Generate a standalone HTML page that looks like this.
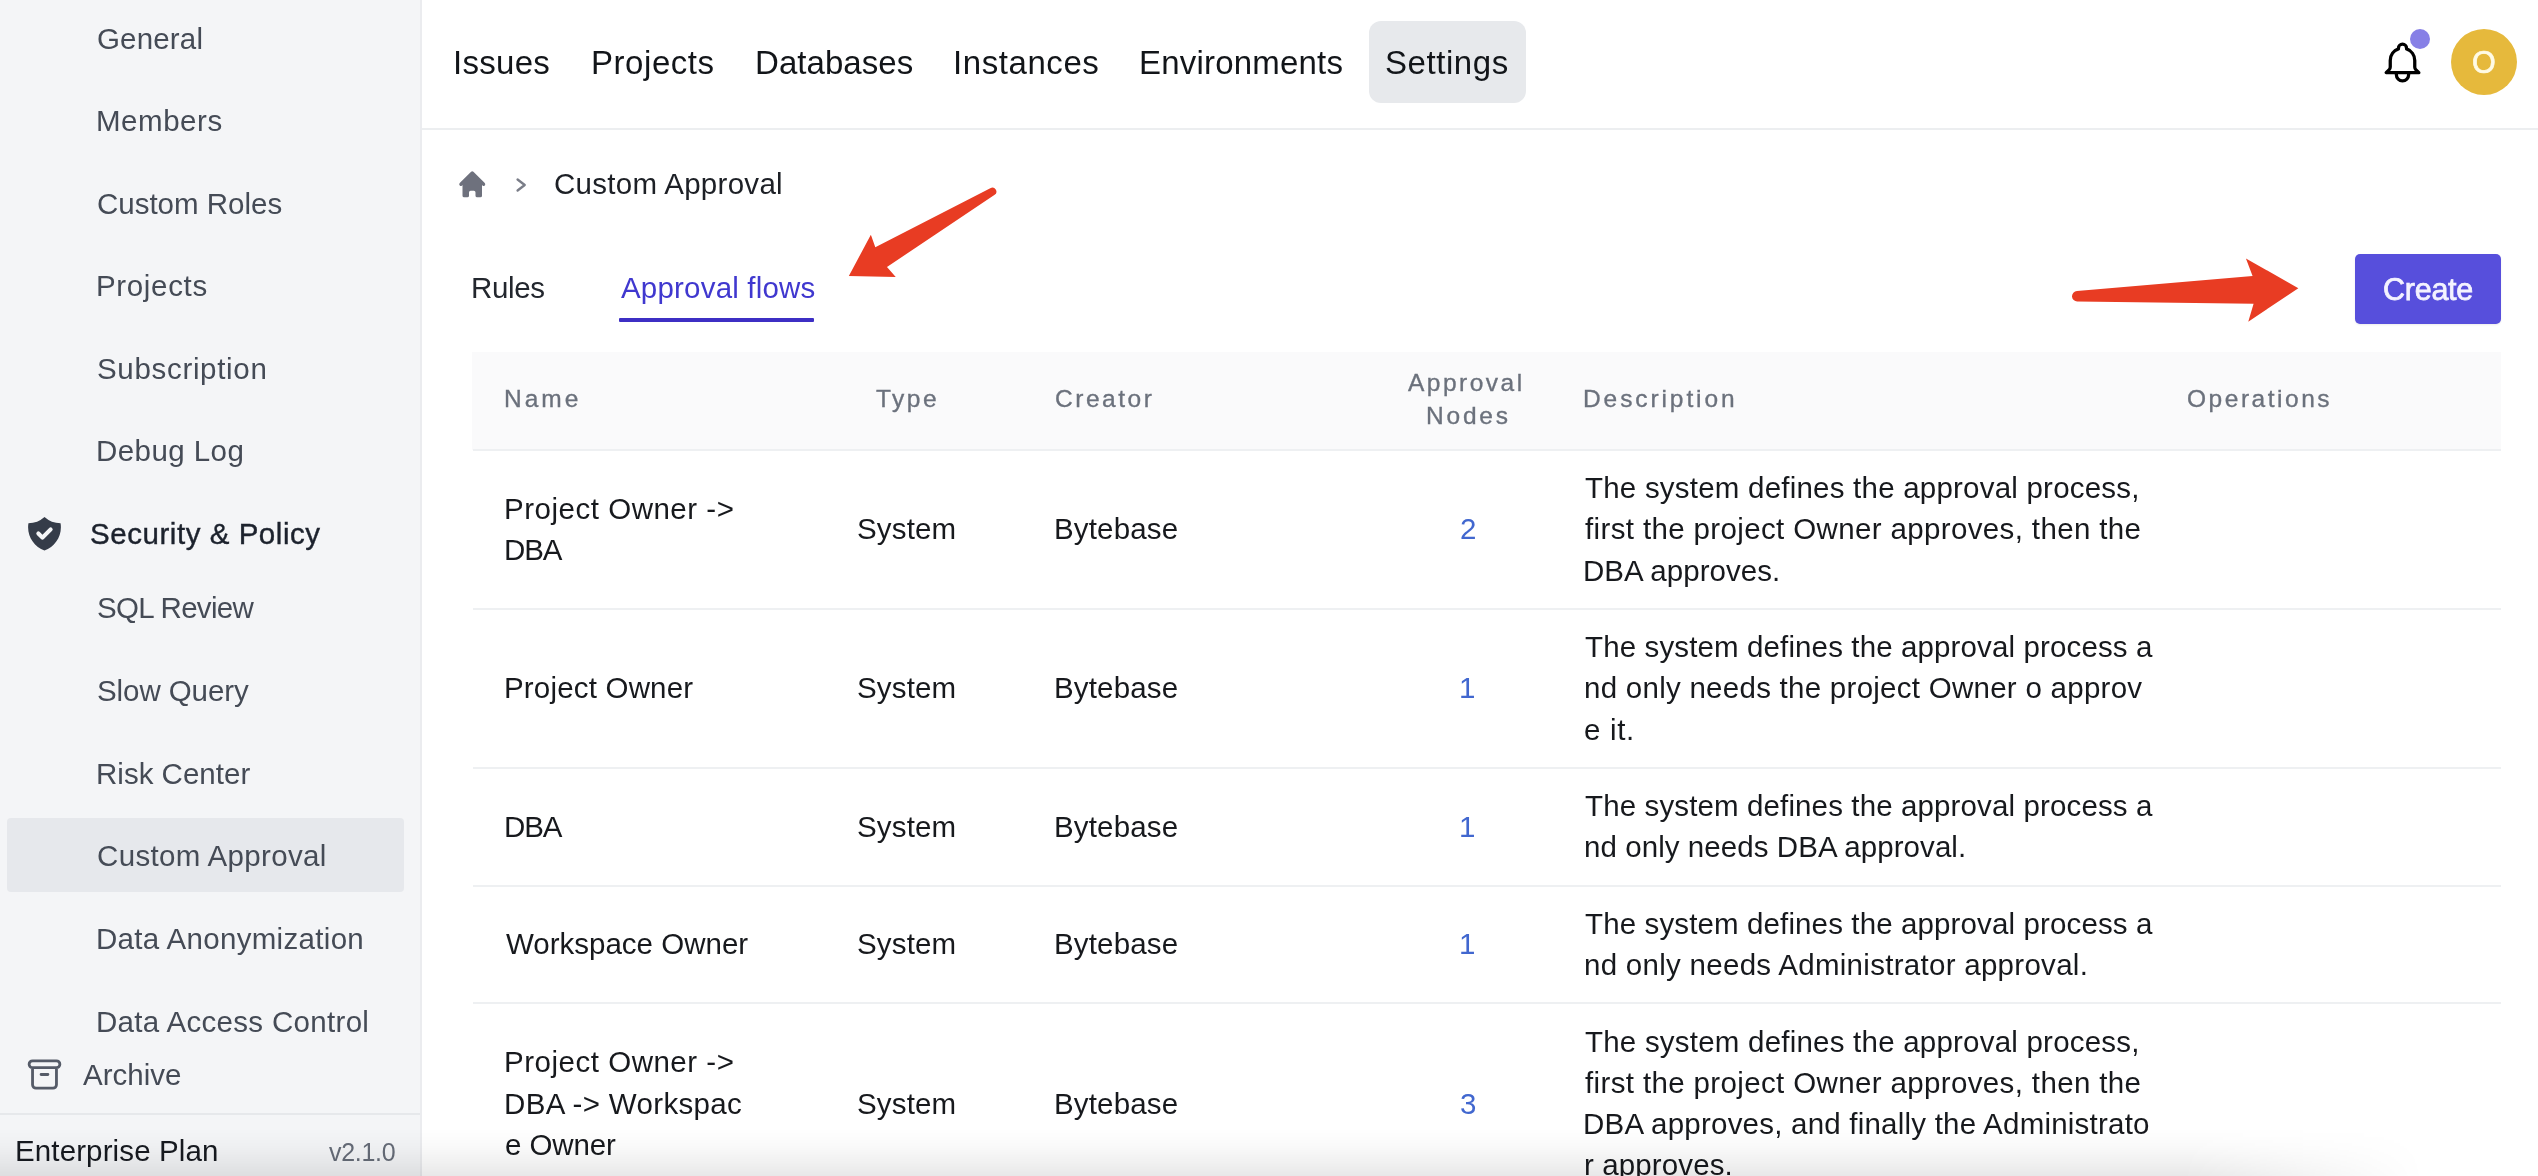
<!DOCTYPE html>
<html>
<head>
<meta charset="utf-8">
<title>Custom Approval</title>
<style>
*{box-sizing:border-box;margin:0;padding:0}
html,body{width:2538px;height:1176px;overflow:hidden;background:#fff}
body{position:relative;font-family:"Liberation Sans",sans-serif;color:#1f2937}
.a{position:absolute}
.x{position:absolute;white-space:pre;will-change:transform}
.rl{position:absolute;left:472.5px;width:2028px;height:2.1px;background:#eef0f2}
</style>
</head>
<body>
<div id="clip" style="position:absolute;left:0;top:0;width:2538px;height:1176px;overflow:hidden">
<div id="w" style="position:absolute;left:-20px;top:-20px;width:2578px;height:1216px;overflow:hidden;filter:blur(0.7px)">
<div style="position:absolute;left:20px;top:20px;width:2538px;height:1176px">

<!-- sidebar -->
<div class="a" style="left:-20px;top:-20px;width:442.3px;height:1216px;background:#f4f5f7;border-right:2.3px solid #ebecef"></div>
<div class="a" style="left:7.3px;top:818.3px;width:396.7px;height:73.4px;background:#e6e8ec;border-radius:4px"></div>
<svg class="a" style="left:23.6px;top:513px" width="41" height="41" viewBox="0 0 20 20"><path fill="#353c49" fill-rule="evenodd" clip-rule="evenodd" d="M2.166 4.999A11.954 11.954 0 0010 1.944 11.954 11.954 0 0017.834 5c.11.65.166 1.32.166 2.001 0 5.225-3.34 9.67-8 11.317C5.34 16.67 2 12.225 2 7c0-.682.057-1.35.166-2.001zm11.541 3.708a1 1 0 00-1.414-1.414L9 10.586 7.707 9.293a1 1 0 00-1.414 1.414l2 2a1 1 0 001.414 0l4-4z"/></svg>
<svg class="a" style="left:23.6px;top:1054px" width="41" height="41" viewBox="0 0 24 24" fill="none" stroke="#555b68" stroke-width="1.65" stroke-linecap="round" stroke-linejoin="round"><path d="M5 8h14M5 8a2 2 0 110-4h14a2 2 0 110 4M5 8v10a2 2 0 002 2h10a2 2 0 002-2V8m-9 4h4"/></svg>
<div class="a" style="left:-20px;top:1112.5px;width:440px;height:2px;background:#e6e8eb"></div>

<!-- top bar -->
<div class="a" style="left:422.3px;top:127.9px;width:2140px;height:2px;background:#eceef0"></div>
<div class="a" style="left:1368.7px;top:20.7px;width:157.3px;height:82.6px;background:#e7e9ec;border-radius:12px"></div>
<svg class="a" style="left:2377.5px;top:37.5px" width="49" height="49" viewBox="0 0 24 24" fill="none" stroke="#000" stroke-width="1.6" stroke-linecap="round" stroke-linejoin="round"><path d="M15 17h5l-1.405-1.405A2.032 2.032 0 0118 14.158V11a6.002 6.002 0 00-4-5.659V5a2 2 0 10-4 0v.341C7.67 6.165 6 8.388 6 11v3.159c0 .538-.214 1.055-.595 1.436L4 17h5m6 0v1a3 3 0 11-6 0v-1m6 0H9"/></svg>
<div class="a" style="left:2410.3px;top:29.3px;width:20px;height:20px;border-radius:50%;background:#8780e6"></div>
<div class="a" style="left:2451.3px;top:29.2px;width:66px;height:66px;border-radius:50%;background:#e6b93c"></div>

<!-- breadcrumb icons -->
<svg class="a" style="left:455.9px;top:167.8px" width="32.5" height="32.5" viewBox="0 0 20 20"><path fill="#6e717d" d="M10.707 2.293a1 1 0 00-1.414 0l-7 7a1 1 0 001.414 1.414L4 10.414V17a1 1 0 001 1h2a1 1 0 001-1v-2a1 1 0 011-1h2a1 1 0 011 1v2a1 1 0 001 1h2a1 1 0 001-1v-6.586l.293.293a1 1 0 001.414-1.414l-7-7z"/></svg>
<svg class="a" style="left:511.3px;top:173.7px" width="20" height="22" viewBox="0 0 20 22" fill="none" stroke="#7a7d88" stroke-width="2.4" stroke-linecap="round" stroke-linejoin="round"><path d="M6.6 5.5 L13.7 11 L6.6 16.5"/></svg>

<!-- tab underline -->
<div class="a" style="left:619.3px;top:318.2px;width:195px;height:4.1px;background:#3d2fc4;border-radius:1px"></div>

<!-- create button -->
<div class="a" style="left:2354.7px;top:254px;width:146.6px;height:70px;background:#574fdc;border-radius:5px;box-shadow:0 1px 2px rgba(0,0,0,.08)"></div>

<!-- table -->
<div class="a" style="left:472.3px;top:351.5px;width:2028.4px;height:98px;background:#fafafb"></div>
<div class="rl" style="top:448.9px"></div>
<div class="rl" style="top:607.7px"></div>
<div class="rl" style="top:766.8px"></div>
<div class="rl" style="top:884.5px"></div>
<div class="rl" style="top:1002.2px"></div>

<div class="x" style="left:97.30px;top:17.70px;font-size:29.5px;line-height:41px;letter-spacing:0.167px;color:#454b56;">General</div>
<div class="x" style="left:96.30px;top:100.20px;font-size:29.5px;line-height:41px;letter-spacing:0.535px;color:#454b56;">Members</div>
<div class="x" style="left:97.30px;top:182.70px;font-size:29.5px;line-height:41px;letter-spacing:-0.009px;color:#454b56;">Custom Roles</div>
<div class="x" style="left:96.30px;top:265.20px;font-size:29.5px;line-height:41px;letter-spacing:0.655px;color:#454b56;">Projects</div>
<div class="x" style="left:97.30px;top:347.70px;font-size:29.5px;line-height:41px;letter-spacing:0.679px;color:#454b56;">Subscription</div>
<div class="x" style="left:96.30px;top:430.20px;font-size:29.5px;line-height:41px;letter-spacing:0.433px;color:#454b56;">Debug Log</div>
<div class="x" style="left:89.70px;top:513.20px;font-size:29.5px;line-height:41px;letter-spacing:0.545px;color:#1c222d;-webkit-text-stroke:0.4px #1c222d;">Security &amp; Policy</div>
<div class="x" style="left:97.30px;top:587.20px;font-size:29.5px;line-height:41px;letter-spacing:-0.661px;color:#454b56;">SQL Review</div>
<div class="x" style="left:97.30px;top:669.90px;font-size:29.5px;line-height:41px;letter-spacing:-0.080px;color:#454b56;">Slow Query</div>
<div class="x" style="left:96.30px;top:752.60px;font-size:29.5px;line-height:41px;letter-spacing:0.013px;color:#454b56;">Risk Center</div>
<div class="x" style="left:97.30px;top:835.30px;font-size:29.5px;line-height:41px;letter-spacing:0.335px;color:#454b56;">Custom Approval</div>
<div class="x" style="left:96.30px;top:918.00px;font-size:29.5px;line-height:41px;letter-spacing:0.318px;color:#454b56;">Data Anonymization</div>
<div class="x" style="left:96.30px;top:1000.70px;font-size:29.5px;line-height:41px;letter-spacing:0.315px;color:#454b56;">Data Access Control</div>
<div class="x" style="left:82.70px;top:1053.50px;font-size:29.5px;line-height:41px;letter-spacing:0.007px;color:#454b56;">Archive</div>
<div class="x" style="left:14.70px;top:1130.20px;font-size:29.5px;line-height:41px;letter-spacing:0.123px;color:#171a20;">Enterprise Plan</div>
<div class="x" style="left:329.30px;top:1134.50px;font-size:25px;line-height:35px;letter-spacing:-0.300px;color:#666c78;">v2.1.0</div>
<div class="x" style="left:453.00px;top:40.00px;font-size:33px;line-height:46px;letter-spacing:0.285px;color:#121519;">Issues</div>
<div class="x" style="left:590.70px;top:40.00px;font-size:33px;line-height:46px;letter-spacing:0.556px;color:#121519;">Projects</div>
<div class="x" style="left:755.00px;top:40.00px;font-size:33px;line-height:46px;letter-spacing:0.054px;color:#121519;">Databases</div>
<div class="x" style="left:953.00px;top:40.00px;font-size:33px;line-height:46px;letter-spacing:0.569px;color:#121519;">Instances</div>
<div class="x" style="left:1139.30px;top:40.00px;font-size:33px;line-height:46px;letter-spacing:0.195px;color:#121519;">Environments</div>
<div class="x" style="left:1385.00px;top:40.00px;font-size:33px;line-height:46px;letter-spacing:0.566px;color:#121519;">Settings</div>
<div class="x" style="left:554.00px;top:163.00px;font-size:29.5px;line-height:41px;letter-spacing:0.285px;color:#1d2026;">Custom Approval</div>
<div class="x" style="left:470.70px;top:267.20px;font-size:29.5px;line-height:41px;letter-spacing:-0.343px;color:#23272e;">Rules</div>
<div class="x" style="left:620.70px;top:267.20px;font-size:29.5px;line-height:41px;letter-spacing:0.193px;color:#4038cf;">Approval flows</div>
<div class="x" style="left:2382.70px;top:268.20px;font-size:30.5px;line-height:43px;letter-spacing:-0.256px;color:#f4f3ff;-webkit-text-stroke:0.75px #f4f3ff;">Create</div>
<div class="x" style="left:2472.20px;top:40.90px;font-size:30.5px;line-height:43px;letter-spacing:0.000px;color:#fffbe6;-webkit-text-stroke:0.7px #fffbe6;">O</div>
<div class="x" style="left:504.00px;top:382.00px;font-size:24.5px;line-height:34px;letter-spacing:2.991px;color:#6b717c;-webkit-text-stroke:0.35px #6b717c;">Name</div>
<div class="x" style="left:876.00px;top:382.00px;font-size:24.5px;line-height:34px;letter-spacing:2.503px;color:#6b717c;-webkit-text-stroke:0.35px #6b717c;">Type</div>
<div class="x" style="left:1055.00px;top:382.00px;font-size:24.5px;line-height:34px;letter-spacing:2.527px;color:#6b717c;-webkit-text-stroke:0.35px #6b717c;">Creator</div>
<div class="x" style="left:1407.50px;top:365.50px;font-size:24.5px;line-height:34px;letter-spacing:2.492px;color:#6b717c;-webkit-text-stroke:0.35px #6b717c;">Approval</div>
<div class="x" style="left:1425.60px;top:398.60px;font-size:24.5px;line-height:34px;letter-spacing:2.807px;color:#6b717c;-webkit-text-stroke:0.35px #6b717c;">Nodes</div>
<div class="x" style="left:1582.70px;top:382.00px;font-size:24.5px;line-height:34px;letter-spacing:2.908px;color:#6b717c;-webkit-text-stroke:0.35px #6b717c;">Description</div>
<div class="x" style="left:2187.00px;top:382.00px;font-size:24.5px;line-height:34px;letter-spacing:2.523px;color:#6b717c;-webkit-text-stroke:0.35px #6b717c;">Operations</div>
<div class="x" style="left:504.00px;top:487.54px;font-size:29.5px;line-height:41px;letter-spacing:0.519px;color:#17191d;">Project Owner -&gt;</div>
<div class="x" style="left:504.00px;top:528.87px;font-size:29.5px;line-height:41px;letter-spacing:-1.140px;color:#17191d;">DBA</div>
<div class="x" style="left:856.70px;top:508.20px;font-size:29.5px;line-height:41px;letter-spacing:0.164px;color:#17191d;">System</div>
<div class="x" style="left:1054.00px;top:508.20px;font-size:29.5px;line-height:41px;letter-spacing:0.158px;color:#17191d;">Bytebase</div>
<div class="x" style="left:1460.15px;top:508.20px;font-size:29.5px;line-height:41px;letter-spacing:0.000px;color:#4167cf;">2</div>
<div class="x" style="left:1584.70px;top:466.87px;font-size:29.5px;line-height:41px;letter-spacing:0.217px;color:#17191d;">The system defines the approval process,</div>
<div class="x" style="left:1584.70px;top:508.20px;font-size:29.5px;line-height:41px;letter-spacing:0.363px;color:#17191d;">first the project Owner approves, then the</div>
<div class="x" style="left:1582.70px;top:549.53px;font-size:29.5px;line-height:41px;letter-spacing:0.033px;color:#17191d;">DBA approves.</div>
<div class="x" style="left:504.00px;top:667.30px;font-size:29.5px;line-height:41px;letter-spacing:0.186px;color:#17191d;">Project Owner</div>
<div class="x" style="left:856.70px;top:667.30px;font-size:29.5px;line-height:41px;letter-spacing:0.164px;color:#17191d;">System</div>
<div class="x" style="left:1054.00px;top:667.30px;font-size:29.5px;line-height:41px;letter-spacing:0.158px;color:#17191d;">Bytebase</div>
<div class="x" style="left:1458.85px;top:667.30px;font-size:29.5px;line-height:41px;letter-spacing:0.000px;color:#4167cf;">1</div>
<div class="x" style="left:1584.70px;top:625.97px;font-size:29.5px;line-height:41px;letter-spacing:0.124px;color:#17191d;">The system defines the approval process a</div>
<div class="x" style="left:1583.70px;top:667.30px;font-size:29.5px;line-height:41px;letter-spacing:0.265px;color:#17191d;">nd only needs the project Owner o approv</div>
<div class="x" style="left:1583.70px;top:708.63px;font-size:29.5px;line-height:41px;letter-spacing:0.662px;color:#17191d;">e it.</div>
<div class="x" style="left:504.00px;top:805.70px;font-size:29.5px;line-height:41px;letter-spacing:-1.140px;color:#17191d;">DBA</div>
<div class="x" style="left:856.70px;top:805.70px;font-size:29.5px;line-height:41px;letter-spacing:0.164px;color:#17191d;">System</div>
<div class="x" style="left:1054.00px;top:805.70px;font-size:29.5px;line-height:41px;letter-spacing:0.158px;color:#17191d;">Bytebase</div>
<div class="x" style="left:1458.85px;top:805.70px;font-size:29.5px;line-height:41px;letter-spacing:0.000px;color:#4167cf;">1</div>
<div class="x" style="left:1584.70px;top:785.04px;font-size:29.5px;line-height:41px;letter-spacing:0.124px;color:#17191d;">The system defines the approval process a</div>
<div class="x" style="left:1583.70px;top:826.37px;font-size:29.5px;line-height:41px;letter-spacing:0.065px;color:#17191d;">nd only needs DBA approval.</div>
<div class="x" style="left:506.00px;top:923.40px;font-size:29.5px;line-height:41px;letter-spacing:0.002px;color:#17191d;">Workspace Owner</div>
<div class="x" style="left:856.70px;top:923.40px;font-size:29.5px;line-height:41px;letter-spacing:0.164px;color:#17191d;">System</div>
<div class="x" style="left:1054.00px;top:923.40px;font-size:29.5px;line-height:41px;letter-spacing:0.158px;color:#17191d;">Bytebase</div>
<div class="x" style="left:1458.85px;top:923.40px;font-size:29.5px;line-height:41px;letter-spacing:0.000px;color:#4167cf;">1</div>
<div class="x" style="left:1584.70px;top:902.74px;font-size:29.5px;line-height:41px;letter-spacing:0.124px;color:#17191d;">The system defines the approval process a</div>
<div class="x" style="left:1583.70px;top:944.06px;font-size:29.5px;line-height:41px;letter-spacing:0.285px;color:#17191d;">nd only needs Administrator approval.</div>
<div class="x" style="left:504.00px;top:1041.17px;font-size:29.5px;line-height:41px;letter-spacing:0.519px;color:#17191d;">Project Owner -&gt;</div>
<div class="x" style="left:504.00px;top:1082.50px;font-size:29.5px;line-height:41px;letter-spacing:0.339px;color:#17191d;">DBA -&gt; Workspac</div>
<div class="x" style="left:505.00px;top:1123.83px;font-size:29.5px;line-height:41px;letter-spacing:-0.111px;color:#17191d;">e Owner</div>
<div class="x" style="left:856.70px;top:1082.50px;font-size:29.5px;line-height:41px;letter-spacing:0.164px;color:#17191d;">System</div>
<div class="x" style="left:1054.00px;top:1082.50px;font-size:29.5px;line-height:41px;letter-spacing:0.158px;color:#17191d;">Bytebase</div>
<div class="x" style="left:1459.70px;top:1082.50px;font-size:29.5px;line-height:41px;letter-spacing:0.000px;color:#4167cf;">3</div>
<div class="x" style="left:1584.70px;top:1020.51px;font-size:29.5px;line-height:41px;letter-spacing:0.217px;color:#17191d;">The system defines the approval process,</div>
<div class="x" style="left:1584.70px;top:1061.84px;font-size:29.5px;line-height:41px;letter-spacing:0.363px;color:#17191d;">first the project Owner approves, then the</div>
<div class="x" style="left:1582.70px;top:1103.16px;font-size:29.5px;line-height:41px;letter-spacing:0.218px;color:#17191d;">DBA approves, and finally the Administrato</div>
<div class="x" style="left:1583.70px;top:1144.49px;font-size:29.5px;line-height:41px;letter-spacing:0.122px;color:#17191d;">r approves.</div>

<!-- red arrows -->
<svg class="a" style="left:0;top:0" width="2538" height="1176" viewBox="0 0 2538 1176">
  <g transform="translate(992.3,191.6) rotate(149.5)" fill="#e83c23"><path d="M0,-4 L129,-11.5 L126.5,-24.5 L166.5,0 L126.5,24.5 L129,11.5 L0,4 A4,4 0 0 1 0,-4 Z"/></g>
  <g transform="translate(2077.2,296.3) rotate(-2.1)" fill="#e83c23"><path d="M0,-5.2 L176,-13.8 L170,-31.6 L221.3,0 L170,31.6 L176,13.8 L0,5.2 A5.2,5.2 0 0 1 0,-5.2 Z"/></g>
</svg>

<!-- bottom shadow -->
<div class="a" style="left:-20px;top:1128px;width:2578px;height:68px;background:linear-gradient(to bottom,rgba(0,0,0,0) 0,rgba(0,0,0,.02) 17px,rgba(0,0,0,.055) 34px,rgba(0,0,0,.09) 48px,rgba(0,0,0,.09) 68px);-webkit-mask-image:linear-gradient(to right,#000 0,#000 2203px,transparent 2444px);mask-image:linear-gradient(to right,#000 0,#000 2203px,transparent 2444px)"></div>

</div>
</div>
</div>
</body>
</html>
